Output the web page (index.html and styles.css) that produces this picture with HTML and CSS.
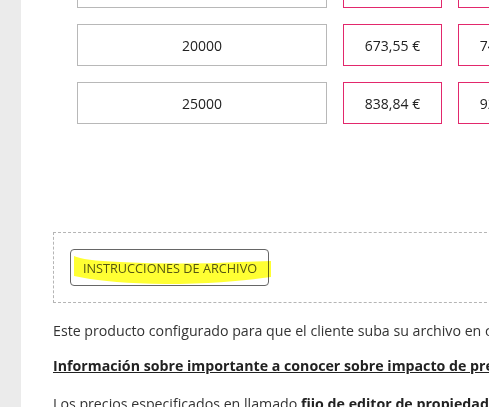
FILE: index.html
```html
<!DOCTYPE html>
<html lang="es">
<head>
    <meta charset="UTF-8">
    <meta name="viewport" content="width=device-width, initial-scale=1.0">
    <title>Producto</title>
    <link rel="stylesheet" href="styles.css">
</head>
<body>
    <div id="page">
        <aside class="sidebar"></aside>

        <main class="content">
            <!-- Tabla de precios por cantidad -->
            <div class="price-table">
                <div class="price-row">
                    <div class="cell qty">15000</div>
                    <div class="cell price">508,27 €</div>
                    <div class="cell price">561,90 €</div>
                </div>
                <div class="price-row">
                    <div class="cell qty">20000</div>
                    <div class="cell price">673,55 €</div>
                    <div class="cell price">741,20 €</div>
                </div>
                <div class="price-row">
                    <div class="cell qty">25000</div>
                    <div class="cell price">838,84 €</div>
                    <div class="cell price">922,73 €</div>
                </div>
            </div>

            <!-- Instrucciones -->
            <div class="file-box">
                <button class="file-btn">INSTRUCCIONES DE ARCHIVO</button>
                <svg class="marker" width="240" height="60" viewBox="0 0 240 60">
                    <path d="M20,23 C26,26 41,28 66,29 C106,31 146,31 186,29 L217,28 L217,44 C196,47 166,50 126,51 C86,51 56,49 36,46 L20,43 Z" fill="#ffff33"/>
                </svg>
            </div>

            <p class="info">Este producto configurado para que el cliente suba su archivo en cualquier formato compatible.</p>
            <p class="info info-title"><a href="#" class="info-link">Información sobre importante a conocer sobre impacto de precios</a></p>
            <p class="info">Los precios especificados en llamado <strong>fijo de editor de propiedades</strong> no incluyen IVA.</p>
        </main>
    </div>
</body>
</html>
```

FILE: styles.css
```css
html, body {
    margin: 0;
    overflow: hidden;
}
body {
    font-family: "Open Sans", Arial, sans-serif;
    font-size: 14px;
    color: #333;
    background: #fff;
}
#page {
    display: flex;
    min-height: 407px;
}
.sidebar {
    width: 21px;
    flex: none;
    background: #ebebeb;
}
.content {
    flex: none;
    width: 900px;
    padding-left: 32px;
}
.price-table {
    display: flex;
    flex-direction: column;
    gap: 16px;
    margin-top: -34px;
    padding-left: 24px;
}
.price-row {
    display: flex;
    gap: 16px;
}
.cell {
    box-sizing: border-box;
    height: 42px;
    display: flex;
    align-items: center;
    justify-content: center;
    color: #222;
}
.qty {
    width: 250px;
    border: 1px solid #b8b8b8;
}
.price {
    width: 99px;
    border: 1px solid #e2286c;
}
.file-box {
    position: relative;
    margin-top: 108px;
    padding: 16px;
    border: 1px dashed #b5b5b5;
}
.file-btn {
    display: block;
    height: 37px;
    width: 199px;
    padding: 0 0 0 12px;
    background: #fff;
    border: 1px solid #666;
    border-radius: 4px;
    font-family: "Open Sans", Arial, sans-serif;
    font-size: 12.7px;
    color: #555;
    text-align: left;
    white-space: nowrap;
    cursor: pointer;
}
.marker {
    position: absolute;
    left: 0;
    top: 0;
    mix-blend-mode: multiply;
    pointer-events: none;
}
.info {
    margin: 17px 0 14px;
    font-size: 14.2px;
    line-height: 21px;
    white-space: nowrap;
}
.info + .info {
    margin-top: 0;
}
.info-title {
    margin-bottom: 17px;
}
.info-link {
    color: #222;
    font-weight: bold;
    text-decoration: underline;
}
.info strong {
    color: #222;
}
```
